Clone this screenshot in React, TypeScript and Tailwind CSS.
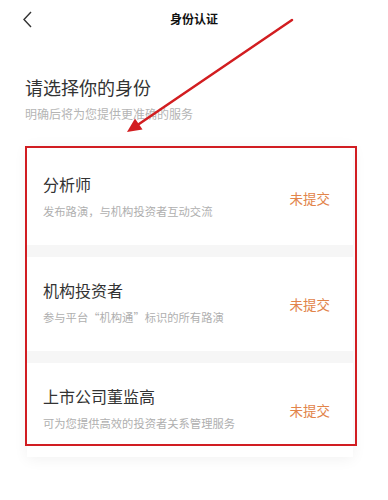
const roles = [
  { title: '分析师', desc: '发布路演，与机构投资者互动交流' },
  { title: '机构投资者', desc: '参与平台“机构通”标识的所有路演' },
  { title: '上市公司董监高', desc: '可为您提供高效的投资者关系管理服务' },
]

function RoleCard({ title, desc }: { title: string; desc: string }) {
  return (
    <div className="flex h-[94px] bg-white pl-[16px] pr-[23px]">
      <div className="flex-1 pt-[22px]">
        <div className="text-[16px] leading-[22px] text-[#333]">{title}</div>
        <div className="mt-[8px] text-[11.3px] leading-[16px] text-[#afafaf]">{desc}</div>
      </div>
      <div className="self-center text-[13.5px] leading-[18px] text-[#e2844a]">未提交</div>
    </div>
  )
}

export default function App() {
  return (
    <div className="relative h-[500px] w-[388px] overflow-hidden bg-white font-['Noto_Sans_CJK_SC',sans-serif]">
      <div className="relative flex h-[38px] items-center justify-center">
        <svg className="absolute left-[20px] top-[9px]" width="16" height="22" viewBox="0 0 16 22">
          <polyline points="11,3 4,10.5 11,18" fill="none" stroke="#333" strokeWidth="1.4" />
        </svg>
        <span className="text-[12px] font-bold text-[#111]">身份认证</span>
      </div>

      <div className="px-[25px]">
        <h1 className="mt-[36px] text-[18px] leading-[26px] text-[#333]">请选择你的身份</h1>
        <p className="mt-[6px] text-[12px] leading-[16px] text-[#b5b5b5]">明确后将为您提供更准确的服务</p>
      </div>

      <div className="ml-[27px] mt-[24px] w-[326px] bg-white pt-[5px] shadow-[0_2px_14px_rgba(0,0,0,0.06)]">
        <RoleCard {...roles[0]} />
        <div className="h-[12px] bg-[#f6f6f6]" />
        <RoleCard {...roles[1]} />
        <div className="h-[12px] bg-[#f6f6f6]" />
        <RoleCard {...roles[2]} />
      </div>

      {/* annotation overlay */}
      <div className="pointer-events-none absolute left-[25px] top-[146px] h-[300px] w-[332px] border-[2.5px] border-[#d11d22]" />
      <svg className="pointer-events-none absolute left-0 top-0" width="388" height="500" viewBox="0 0 388 500">
        <line x1="292" y1="20" x2="139" y2="124" stroke="#d21d20" strokeWidth="2.5" strokeLinecap="round" />
        <polygon points="127,132 142.5,129.5 135,118.5" fill="#d21d20" />
      </svg>
    </div>
  )
}
